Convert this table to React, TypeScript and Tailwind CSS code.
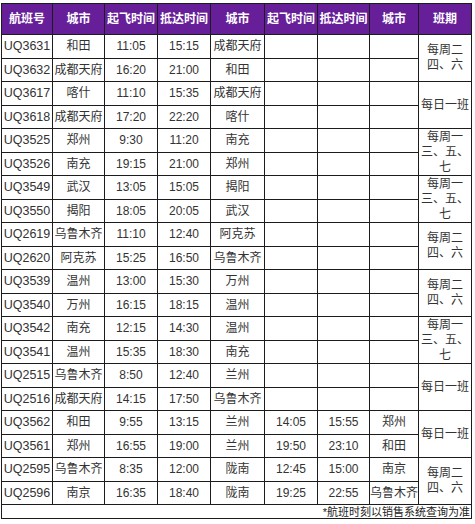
import React from "react";

type Row = {
  code: string;
  from: string;
  dep: string;
  arr: string;
  to: string;
  dep2?: string;
  arr2?: string;
  to2?: string;
  sched?: string[];
};

const rows: Row[] = [
  { code: "UQ3631", from: "和田", dep: "11:05", arr: "15:15", to: "成都天府", sched: ["每周二", "四、六"] },
  { code: "UQ3632", from: "成都天府", dep: "16:20", arr: "21:00", to: "和田" },
  { code: "UQ3617", from: "喀什", dep: "11:10", arr: "15:35", to: "成都天府", sched: ["每日一班"] },
  { code: "UQ3618", from: "成都天府", dep: "17:20", arr: "22:20", to: "喀什" },
  { code: "UQ3525", from: "郑州", dep: "9:30", arr: "11:20", to: "南充", sched: ["每周一", "三、五、", "七"] },
  { code: "UQ3526", from: "南充", dep: "19:15", arr: "21:00", to: "郑州" },
  { code: "UQ3549", from: "武汉", dep: "13:05", arr: "15:05", to: "揭阳", sched: ["每周一", "三、五、", "七"] },
  { code: "UQ3550", from: "揭阳", dep: "18:05", arr: "20:05", to: "武汉" },
  { code: "UQ2619", from: "乌鲁木齐", dep: "11:10", arr: "12:40", to: "阿克苏", sched: ["每周二", "四、六"] },
  { code: "UQ2620", from: "阿克苏", dep: "15:25", arr: "16:50", to: "乌鲁木齐" },
  { code: "UQ3539", from: "温州", dep: "13:00", arr: "15:30", to: "万州", sched: ["每周二", "四、六"] },
  { code: "UQ3540", from: "万州", dep: "16:15", arr: "18:15", to: "温州" },
  { code: "UQ3542", from: "南充", dep: "12:15", arr: "14:30", to: "温州", sched: ["每周一", "三、五、", "七"] },
  { code: "UQ3541", from: "温州", dep: "15:35", arr: "18:30", to: "南充" },
  { code: "UQ2515", from: "乌鲁木齐", dep: "8:50", arr: "12:40", to: "兰州", sched: ["每日一班"] },
  { code: "UQ2516", from: "成都天府", dep: "14:15", arr: "17:50", to: "乌鲁木齐" },
  { code: "UQ3562", from: "和田", dep: "9:55", arr: "13:15", to: "兰州", dep2: "14:05", arr2: "15:55", to2: "郑州", sched: ["每日一班"] },
  { code: "UQ3561", from: "郑州", dep: "16:55", arr: "19:00", to: "兰州", dep2: "19:50", arr2: "23:10", to2: "和田" },
  { code: "UQ2595", from: "乌鲁木齐", dep: "8:35", arr: "12:00", to: "陇南", dep2: "12:45", arr2: "15:00", to2: "南京", sched: ["每周二", "四、六"] },
  { code: "UQ2596", from: "南京", dep: "16:35", arr: "18:40", to: "陇南", dep2: "19:25", arr2: "22:55", to2: "乌鲁木齐" },
];

const headers = ["航班号", "城市", "起飞时间", "抵达时间", "城市", "起飞时间", "抵达时间", "城市", "班期"];
const widths = [51, 52, 53, 53, 54, 53, 52, 49, 53];

const td = "border-[1.5px] border-[#1c1c1c] p-0 text-center whitespace-nowrap align-middle";

export default function App() {
  return (
    <div className="bg-white pt-[3px] pl-[1px] text-[#333]" style={{ fontFamily: '"Liberation Sans", "Noto Sans CJK SC", sans-serif' }}>
      <table className="table-fixed border-collapse w-[471px]">
        <colgroup>
          {widths.map((w, i) => (
            <col key={i} style={{ width: w }} />
          ))}
        </colgroup>
        <thead>
          <tr className="h-[31px]">
            {headers.map((h, i) => (
              <th key={i} className={`${td} bg-[#661e99] text-white font-bold text-[12px] leading-none`}>
                {h}
              </th>
            ))}
          </tr>
        </thead>
        <tbody>
          {rows.map((r, i) => (
            <tr key={i} className="h-[23.5px]">
              <td className={`${td} text-[12.5px] leading-none`}>{r.code}</td>
              <td className={`${td} text-[12px] leading-none`}>{r.from}</td>
              <td className={`${td} text-[12px] leading-none`}>{r.dep}</td>
              <td className={`${td} text-[12px] leading-none`}>{r.arr}</td>
              <td className={`${td} text-[12px] leading-none`}>{r.to}</td>
              <td className={`${td} text-[12px] leading-none`}>{r.dep2 ?? ""}</td>
              <td className={`${td} text-[12px] leading-none`}>{r.arr2 ?? ""}</td>
              <td className={`${td} text-[12px] leading-none`}>{r.to2 ?? ""}</td>
              {r.sched && (
                <td rowSpan={2} className={`${td} text-[12px] leading-[15px]`}>
                  {r.sched.map((s, j) => (
                    <div key={j}>{s}</div>
                  ))}
                </td>
              )}
            </tr>
          ))}
          <tr className="h-[14px]">
            <td colSpan={9} className="border-[1.5px] border-[#1c1c1c] p-0 pr-[1px] text-right text-[11px] leading-[12px] text-[#222]">
              *航班时刻以销售系统查询为准
            </td>
          </tr>
        </tbody>
      </table>
    </div>
  );
}
